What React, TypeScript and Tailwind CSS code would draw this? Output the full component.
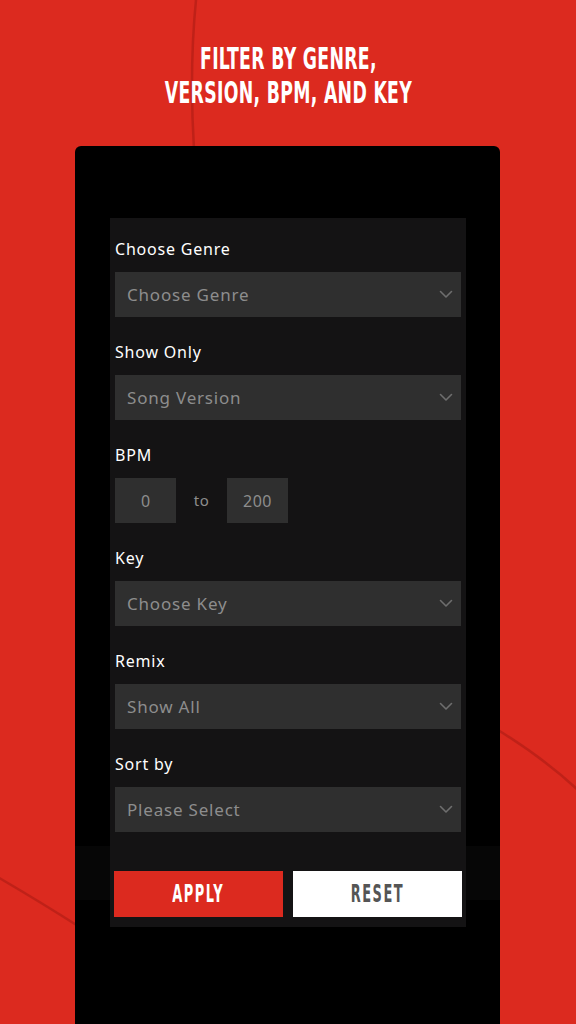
import React from "react";

const Chevron = () => (
  <svg width="14" height="9" viewBox="0 0 14 9" fill="none" className="shrink-0">
    <path d="M1.5 1.5 L7 7 L12.5 1.5" stroke="#6e6e6e" strokeWidth="1.6" strokeLinecap="round" strokeLinejoin="round" />
  </svg>
);

const Label = ({ children }: { children: React.ReactNode }) => (
  <div className="h-[22px] flex items-center text-[16px] text-white leading-none tracking-[0.8px]">{children}</div>
);

const Select = ({ text }: { text: string }) => (
  <div className="mt-[12px] h-[45px] w-[346px] bg-[#2f2f2f] flex items-center justify-between pl-[12px] pr-[8px]">
    <span className="text-[17px] text-[#8d8d8d] tracking-[0.8px]">{text}</span>
    <Chevron />
  </div>
);

export default function App() {
  const poppins = { fontFamily: '"Noto Sans", "Open Sans", sans-serif' };
  const condensed = { fontFamily: '"DejaVu Sans Condensed", "DejaVu Sans", sans-serif' };
  return (
    <div className="relative w-[576px] h-[1024px] overflow-hidden bg-[#dc2a1f]" style={poppins}>
      <svg className="absolute inset-0" width="576" height="1024" viewBox="0 0 576 1024" fill="none">
        <path d="M196 0 C 191 50, 191 100, 194 150" stroke="#b81f17" strokeWidth="2.5" opacity="0.8" />
        <path d="M498 730 C 530 750, 555 768, 580 792" stroke="#b81f17" strokeWidth="2.5" opacity="0.8" />
        <path d="M-4 876 C 25 893, 50 908, 78 926" stroke="#b81f17" strokeWidth="2.5" opacity="0.8" />
      </svg>

      <div className="relative flex flex-col items-center pt-[41px]">
        <div
          className="text-white font-bold text-[31px] leading-[34px] text-center tracking-[0.5px] scale-x-[0.62] whitespace-nowrap"
          style={condensed}
        >
          <div>FILTER BY GENRE,</div>
          <div>VERSION, BPM, AND KEY</div>
        </div>
      </div>

      <div className="absolute left-[75px] top-[146px] w-[425px] h-[900px] bg-black rounded-t-[6px]">
        <div className="absolute left-0 right-0 top-[700px] h-[54px] bg-[#060606]" />
        <div className="relative ml-[35px] mt-[72px] w-[356px] h-[709px] bg-[#141314] pl-[5px] pt-[20px]">
          <Label>Choose Genre</Label>
          <Select text="Choose Genre" />
          <div className="mt-[24px]" />
          <Label>Show Only</Label>
          <Select text="Song Version" />
          <div className="mt-[24px]" />
          <Label>BPM</Label>
          <div className="mt-[12px] flex items-center">
            <div className="w-[61px] h-[45px] bg-[#2f2f2f] flex items-center justify-center text-[16px] text-[#8d8d8d]">0</div>
            <div className="w-[51px] text-center text-[15px] text-[#8d8d8d] tracking-[0.5px]">to</div>
            <div className="w-[61px] h-[45px] bg-[#2f2f2f] flex items-center justify-center text-[16px] text-[#8d8d8d] tracking-[0.5px]">200</div>
          </div>
          <div className="mt-[24px]" />
          <Label>Key</Label>
          <Select text="Choose Key" />
          <div className="mt-[24px]" />
          <Label>Remix</Label>
          <Select text="Show All" />
          <div className="mt-[24px]" />
          <Label>Sort by</Label>
          <Select text="Please Select" />
          <div className="mt-[39px] flex gap-[10px] -ml-[1px]">
            <div
              className="w-[169px] h-[46px] bg-[#dc2a1f] flex items-center justify-center text-white font-bold text-[24px]"
              style={condensed}
            >
              <span className="scale-x-[0.6] tracking-[2.5px]">APPLY</span>
            </div>
            <div
              className="w-[169px] h-[46px] bg-white flex items-center justify-center text-[#555555] font-bold text-[24px]"
              style={condensed}
            >
              <span className="scale-x-[0.6] tracking-[2.5px]">RESET</span>
            </div>
          </div>
        </div>
      </div>
    </div>
  );
}
